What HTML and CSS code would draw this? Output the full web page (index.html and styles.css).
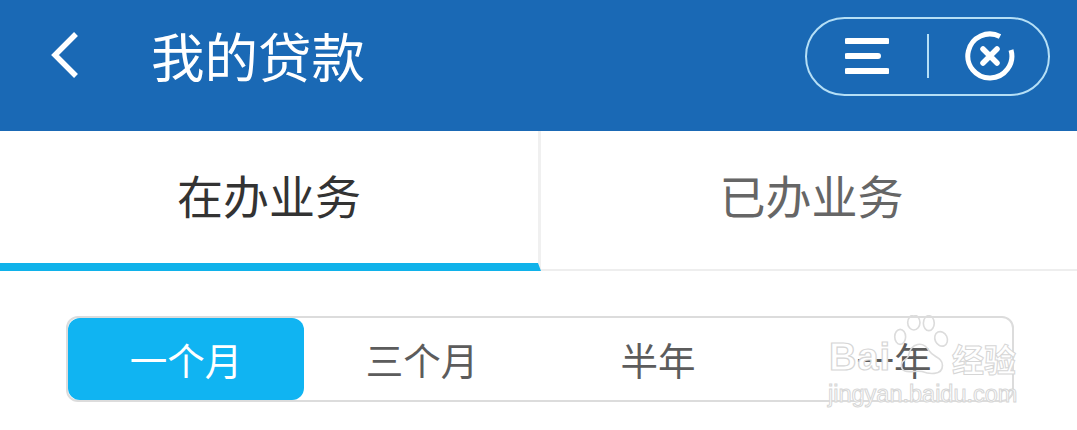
FILE: index.html
```html
<!DOCTYPE html>
<html lang="zh">
<head>
<meta charset="utf-8">
<title>我的贷款</title>
<link rel="stylesheet" href="styles.css">
</head>
<body>
<div class="page">
  <header class="header">
    <svg class="back" width="30" height="48" viewBox="0 0 30 48"><path d="M26 3 L5 24 L26 45" fill="none" stroke="#fff" stroke-width="5.5"/></svg>
    <h1 class="title">我的贷款</h1>
    <div class="pill">
      <svg class="menu" width="44" height="36" viewBox="0 0 44 36"><path d="M2 3H42M2 18H33M2 33H42" stroke="#fff" stroke-width="6" stroke-linecap="round" fill="none"/></svg>
      <span class="pill-sep"></span>
      <svg class="close" width="50" height="50" viewBox="0 0 50 50"><path d="M35 5.5 A22 22 0 1 0 46 19" fill="none" stroke="#fff" stroke-width="5"/><path d="M18 18L32 32M32 18L18 32" stroke="#fff" stroke-width="5.5" stroke-linecap="round"/></svg>
    </div>
  </header>
  <nav class="tabs">
    <div class="tab tab-active">在办业务</div>
    <div class="tab">已办业务</div>
  </nav>
  <div class="segment">
    <div class="seg seg-active">一个月</div>
    <div class="seg">三个月</div>
    <div class="seg">半年</div>
    <div class="seg">一年</div>
  </div>
  <div class="watermark">
    <span class="wm-bai">Bai</span>
    <svg class="wm-paw" width="60" height="60" viewBox="0 0 84 88"><g fill="none" stroke="#dcdcdc" stroke-width="2.4"><ellipse cx="10" cy="32" rx="8" ry="11"/><ellipse cx="30" cy="11" rx="9" ry="11"/><ellipse cx="52" cy="12" rx="8" ry="11"/><ellipse cx="70" cy="35" rx="9" ry="11" transform="rotate(-25 70 35)"/><path d="M22 60 C26 40 44 38 52 52 C58 62 72 62 72 74 C72 90 50 86 42 83 C32 80 10 90 12 72 C13 66 20 66 22 60 Z"/></g></svg>
    <span class="wm-cn">经验</span>
    <span class="wm-url">jingyan.baidu.com</span>
  </div>
</div>
</body>
</html>
```
FILE: styles.css
```css
* { box-sizing: border-box; }
html, body { margin: 0; padding: 0; background: #fff; }
body { font-family: "Noto Sans CJK SC", "Noto Sans", sans-serif; overflow: hidden; }
.page { position: relative; width: 1077px; height: 430px; }
.header {
  height: 131px;
  background: #1a69b5;
  display: flex;
  align-items: center;
  padding: 0 27px 22px 50px;
  color: #fff;
}
.back { flex: none; }
.title { margin: 0 0 0 71px; font-size: 53.5px; font-weight: 400; line-height: 60px; flex: 1; }
.pill {
  width: 245px;
  height: 79px;
  margin-top: 3px;
  border: 2px solid #b5dff6;
  border-radius: 40px;
  display: flex;
  align-items: center;
  padding-left: 38px;
}
.menu { flex: none; }
.pill-sep { width: 2px; height: 44px; background: #b5dff6; margin-left: 38px; flex: none; }
.close { flex: none; margin-left: 36px; }
.tabs { display: flex; height: 140px; }
.tab {
  flex: none;
  width: 536px;
  display: flex;
  align-items: center;
  justify-content: center;
  font-size: 46px;
  color: #666;
  padding: 0 0 12px 5px;
  border-bottom: 2px solid #eee;
}
.tab-active {
  width: 541px;
  color: #333;
  border-bottom: 8px solid #10b2ea;
  border-right: 3px solid #f0f0f0;
  padding: 0 0 6px 0;
}
.segment {
  display: flex;
  width: 948px;
  height: 86px;
  margin: 45px 0 0 66px;
  border: 2px solid #dcdcdc;
  border-radius: 12px;
}
.seg {
  flex: none;
  width: 236px;
  display: flex;
  align-items: center;
  justify-content: center;
  font-size: 37.5px;
  color: #5c5c5c;
  padding-bottom: 2px;
}
.seg-active { background: #10b4f2; color: #fff; border-radius: 12px; }
.watermark {
  position: absolute;
  left: 826px;
  top: 314px;
  width: 196px;
  height: 96px;
  font-family: "Liberation Sans", sans-serif;
}
.wm-bai {
  position: absolute;
  left: 3px;
  top: 15px;
  font-size: 38px;
  line-height: 56px;
  font-weight: 700;
  letter-spacing: 1px;
  color: #fff;
  -webkit-text-stroke: 1.2px #d6d6d6;
}
.wm-paw { position: absolute; left: 66px; top: 1px; }
.wm-cn {
  position: absolute;
  left: 126px;
  top: 22px;
  font-family: "Noto Sans CJK SC", sans-serif;
  font-size: 32px;
  line-height: 44px;
  font-weight: 700;
  color: #fff;
  -webkit-text-stroke: 1px #d6d6d6;
}
.wm-url {
  position: absolute;
  left: 2px;
  top: 65px;
  font-size: 23.5px;
  line-height: 30px;
  white-space: nowrap;
  color: #fff;
  -webkit-text-stroke: 1px #d6d6d6;
}
```
